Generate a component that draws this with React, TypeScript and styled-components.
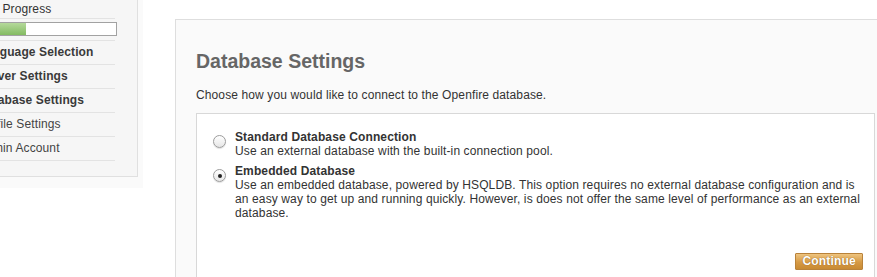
import styled, { createGlobalStyle } from 'styled-components';

const GlobalStyle = createGlobalStyle`
  html, body {
    margin: 0;
    padding: 0;
    background: #fff;
    overflow: hidden;
  }
  body {
    font-family: "Liberation Sans", Arial, Helvetica, sans-serif;
    font-size: 12px;
    letter-spacing: 0.12px;
    color: #333;
  }
`;

const Page = styled.div`
  display: flex;
  align-items: flex-start;
  gap: 32px;
`;

const SidebarHalo = styled.div`
  margin-left: -34px;
  margin-top: -1px;
  padding: 0 5px 11px 0;
  background: #fafafa;
  flex-shrink: 0;
`;

const SidebarPanel = styled.div`
  width: 170px;
  padding-bottom: 15px;
  background: #f6f6f6;
  border: 1px solid #e0e0e0;
`;

const SidebarHeader = styled.div`
  margin-right: 22px;
  height: 18px;
  line-height: 19px;
  border-bottom: 1px solid #e3e3e3;
  font-size: 12px;
  color: #333;
`;

const ProgressBlock = styled.div`
  margin-right: 22px;
  padding: 3px 0 4px 11px;
  border-bottom: 1px solid #e3e3e3;
`;

const ProgressBar = styled.div`
  height: 12px;
  margin-right: -2px;
  border: 1px solid #a2a2a2;
  background: #fff;
`;

const ProgressFill = styled.div`
  height: 100%;
  background: linear-gradient(#b5d99b, #84bb62);
`;

const StepList = styled.ul`
  list-style: none;
  margin: 0 22px 0 0;
  padding: 0;
`;

const Step = styled.li<{ $done?: boolean }>`
  height: 23px;
  line-height: 23px;
  padding-left: 11px;
  border-bottom: 1px solid #e3e3e3;
  font-size: 12px;
  font-weight: ${p => (p.$done ? 'bold' : 'normal')};
  color: ${p => (p.$done ? '#3a3a3a' : '#444')};
  white-space: nowrap;
`;

const MainPanel = styled.div`
  flex-shrink: 0;
  width: 679px;
  margin-top: 19px;
  padding: 30px 20px 0 20px;
  background: #fafafa;
  border: 1px solid #dedede;
  border-right: none;
  border-bottom: none;
`;

const Title = styled.h1`
  margin: 0;
  font-size: 19.5px;
  line-height: 22px;
  font-weight: bold;
  letter-spacing: 0;
  color: #666;
`;

const Intro = styled.p`
  margin: 16px 0 0;
  font-size: 12px;
  line-height: 14px;
  color: #333;
`;

const OptionBox = styled.div`
  margin-top: 11px;
  padding: 16px 11px 24px 16px;
  background: #fff;
  border: 1px solid #d8d8d8;
  border-bottom: none;
  display: flex;
  flex-direction: column;
  gap: 6px;
`;

const Option = styled.label`
  display: flex;
  align-items: flex-start;
  gap: 9px;
  cursor: pointer;
`;

const Radio = styled.span<{ $checked?: boolean }>`
  flex-shrink: 0;
  box-sizing: border-box;
  width: 13px;
  height: 13px;
  margin-top: 5px;
  border-radius: 50%;
  border: 1px solid #9c9c9c;
  background: linear-gradient(#ffffff, #e6e6e6);
  box-shadow: 0 1px 1px rgba(0, 0, 0, 0.12);
  display: inline-flex;
  align-items: center;
  justify-content: center;

  &::after {
    content: '';
    display: ${p => (p.$checked ? 'block' : 'none')};
    width: 4px;
    height: 4px;
    border-radius: 50%;
    background: #222;
  }
`;

const OptionText = styled.div`
  max-width: 628px;
  font-size: 12px;
  line-height: 14px;
  color: #333;
`;

const OptionName = styled.div`
  font-weight: bold;
  color: #333;
`;

const ButtonRow = styled.div`
  display: flex;
  justify-content: flex-end;
  margin-top: 27px;
`;

const ContinueButton = styled.button`
  height: 17px;
  padding: 0 6px;
  font-family: inherit;
  font-size: 12px;
  font-weight: bold;
  line-height: 15px;
  letter-spacing: 0.2px;
  color: #fff;
  text-shadow: 0 0 1px rgba(120, 70, 10, 0.9);
  background: linear-gradient(#eec47f, #d69a45 55%, #c88a33);
  border: 1px solid #b9823a;
  border-radius: 1px;
  cursor: pointer;
`;

const steps = [
  { label: 'Language Selection', done: true },
  { label: 'Server Settings', done: true },
  { label: 'Database Settings', done: true },
  { label: 'Profile Settings', done: false },
  { label: 'Admin Account', done: false },
];

export default function App() {
  const progress = 34;

  return (
    <>
      <GlobalStyle />
      <Page>
        <SidebarHalo>
          <SidebarPanel>
            <SidebarHeader>Setup Progress</SidebarHeader>
            <ProgressBlock>
              <ProgressBar>
                <ProgressFill style={{ width: `${progress}%` }} />
              </ProgressBar>
            </ProgressBlock>
            <StepList>
              {steps.map(s => (
                <Step key={s.label} $done={s.done}>
                  {s.label}
                </Step>
              ))}
            </StepList>
          </SidebarPanel>
        </SidebarHalo>

        <MainPanel>
          <Title>Database Settings</Title>
          <Intro>Choose how you would like to connect to the Openfire database.</Intro>
          <OptionBox>
            <Option>
              <Radio />
              <OptionText>
                <OptionName>Standard Database Connection</OptionName>
                Use an external database with the built-in connection pool.
              </OptionText>
            </Option>
            <Option>
              <Radio $checked />
              <OptionText>
                <OptionName>Embedded Database</OptionName>
                Use an embedded database, powered by HSQLDB. This option requires no external
                database configuration and is an easy way to get up and running quickly. However,
                is does not offer the same level of performance as an external database.
              </OptionText>
            </Option>
            <ButtonRow>
              <ContinueButton>Continue</ContinueButton>
            </ButtonRow>
          </OptionBox>
        </MainPanel>
      </Page>
    </>
  );
}
